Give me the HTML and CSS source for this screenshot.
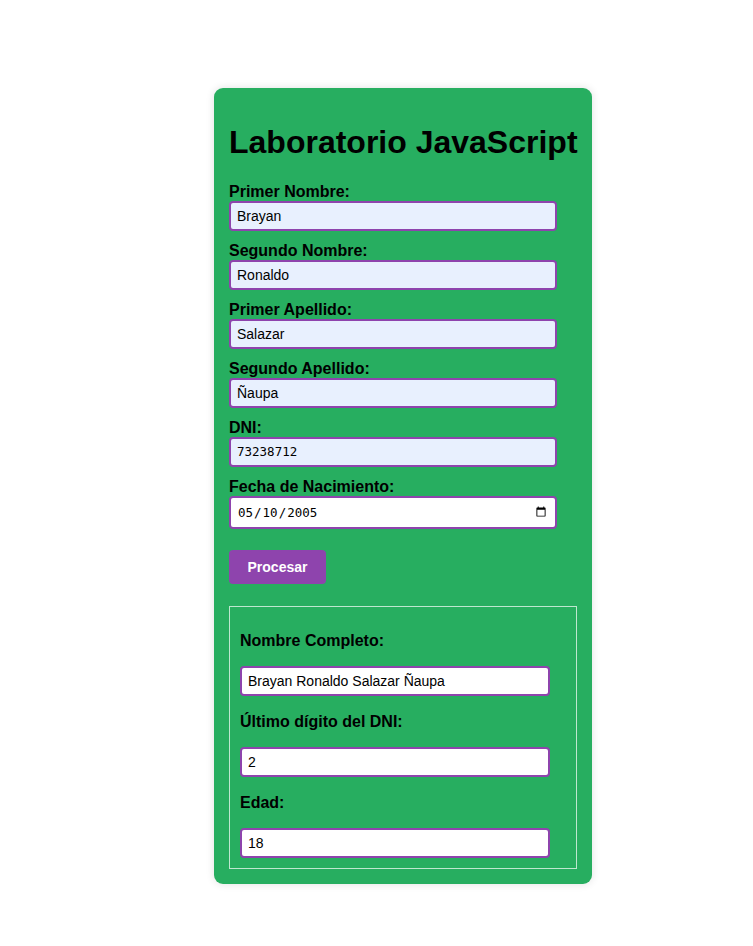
FILE: index.html
```html
<!DOCTYPE html>
<html lang="es">
<head>
<meta charset="UTF-8">
<title>Laboratorio JavaScript</title>
<link rel="stylesheet" href="styles.css">
</head>
<body>
<div class="card">
  <h1 class="title">Laboratorio JavaScript</h1>
  <form class="form">
    <label class="field-label" for="n1">Primer Nombre:</label>
    <input class="field filled" id="n1" type="text" value="Brayan">
    <label class="field-label" for="n2">Segundo Nombre:</label>
    <input class="field filled" id="n2" type="text" value="Ronaldo">
    <label class="field-label" for="a1">Primer Apellido:</label>
    <input class="field filled" id="a1" type="text" value="Salazar">
    <label class="field-label" for="a2">Segundo Apellido:</label>
    <input class="field filled" id="a2" type="text" value="Ñaupa">
    <label class="field-label" for="dni">DNI:</label>
    <input class="field filled mono" id="dni" type="text" value="73238712">
    <label class="field-label" for="fn">Fecha de Nacimiento:</label>
    <input class="field date mono" id="fn" type="date" value="2005-05-10">
    <div class="actions">
      <button type="button" class="btn">Procesar</button>
    </div>
  </form>
  <div class="results">
    <p class="res-label">Nombre Completo:</p>
    <input class="res-field" type="text" value="Brayan Ronaldo Salazar Ñaupa" readonly>
    <p class="res-label">Último dígito del DNI:</p>
    <input class="res-field" type="text" value="2" readonly>
    <p class="res-label">Edad:</p>
    <input class="res-field" type="text" value="18" readonly>
  </div>
</div>
</body>
</html>
```

FILE: styles.css
```css
html, body {
  margin: 0;
  padding: 0;
  background: #ffffff;
}

body {
  font-family: "Liberation Sans", Arial, sans-serif;
  color: #000;
}

.card {
  box-sizing: border-box;
  width: 378px;
  margin: 88px 0 62px 214px;
  padding: 15px;
  background: #27ae60;
  border-radius: 9px;
  box-shadow: 0 0 8px rgba(0, 0, 0, 0.12);
}

.title {
  font-size: 32px;
  font-weight: bold;
  margin: 21.44px 0;
  line-height: normal;
  white-space: nowrap;
}

.form {
  margin: 0;
}

.field-label {
  display: block;
  font-size: 16px;
  font-weight: bold;
  line-height: 18px;
}

.field {
  display: block;
  box-sizing: border-box;
  width: 328px;
  height: 30px;
  margin: 0 0 11px 0;
  padding: 0 6px;
  border: 2px solid #8e44ad;
  border-radius: 4px;
  background: #ffffff;
  font-family: "Liberation Sans", Arial, sans-serif;
  font-size: 14px;
  color: #000;
  outline: none;
}

.field.filled {
  background: #e8f0fe;
}

.mono {
  font-family: "DejaVu Sans Mono", "Liberation Mono", monospace;
  font-size: 12.5px;
}

.field.date {
  height: 33px;
  margin-bottom: 21px;
  padding: 0 6px;
}

.actions {
  display: flex;
}

.btn {
  box-sizing: border-box;
  width: 97px;
  height: 34px;
  padding: 0;
  border: none;
  border-radius: 4px;
  background: #8e44ad;
  color: #ffffff;
  font-family: "Liberation Sans", Arial, sans-serif;
  font-size: 14px;
  font-weight: bold;
  cursor: pointer;
}

.results {
  margin-top: 22px;
  padding: 0 10px 10px 10px;
  border: 1px solid rgba(255, 255, 255, 0.7);
  display: flow-root;
}

.res-label {
  margin: 16px 0;
  font-size: 16px;
  font-weight: bold;
  line-height: 19px;
}

.results > .res-label:first-child {
  margin-top: 24px;
}

.res-field {
  display: block;
  box-sizing: border-box;
  width: 310px;
  height: 30px;
  margin: 0;
  padding: 0 6px;
  border: 2px solid #8e44ad;
  border-radius: 4px;
  background: #ffffff;
  font-family: "Liberation Sans", Arial, sans-serif;
  font-size: 14px;
  color: #000;
  outline: none;
}
```
